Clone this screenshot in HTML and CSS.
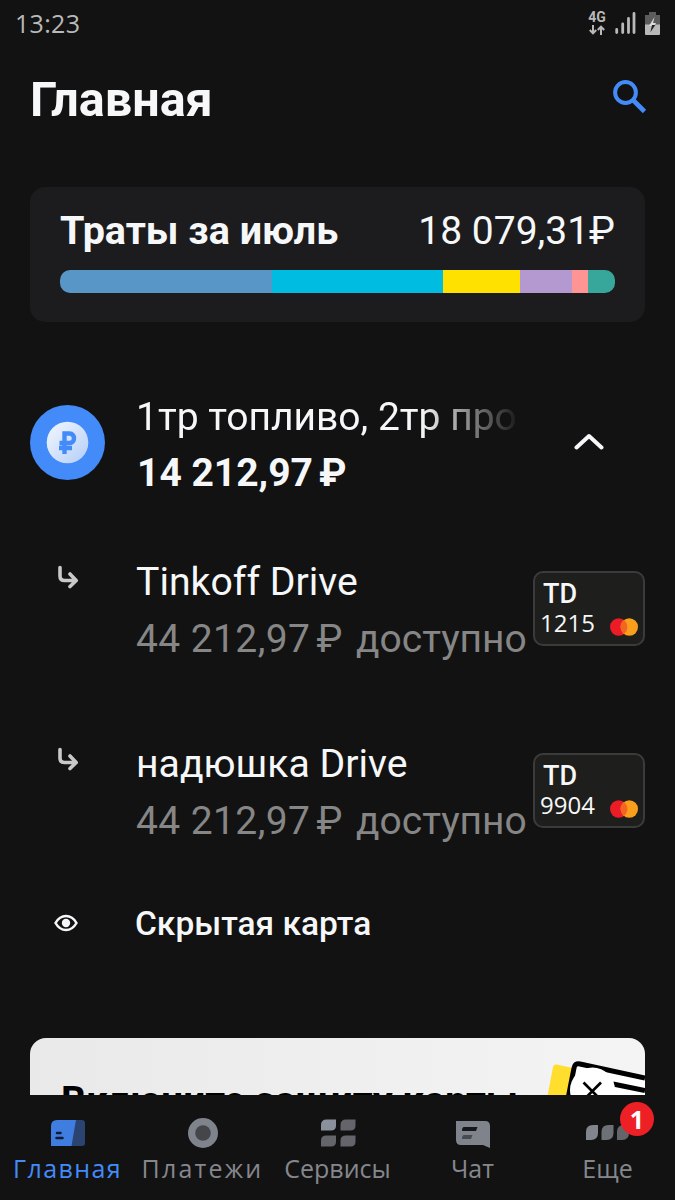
FILE: index.html
```html
<!DOCTYPE html>
<html lang="ru">
<head>
  <meta charset="UTF-8" />
  <title>Главная</title>
  <link rel="stylesheet" href="styles.css">
</head>
<body>

<div class="status-bar">
  <span class="clock">13:23</span>
  <div class="status-icons">
    <div class="network">
      <span>4G</span>
      <svg width="16" height="10" viewBox="0 0 16 10">
        <path d="M4 0V8M.8 5 4 8.4 7.2 5M12 10V2M8.8 5 12 1.6 15.2 5" fill="none" stroke="currentColor" stroke-width="2"/>
      </svg>
    </div>
    <svg width="21" height="22" viewBox="0 0 21 22">
      <path d="M1.7 17.5V20.5M7.7 12V20.5M13.5 6.5V20.5M19 1.5V20.5" stroke="currentColor" stroke-width="2.8" stroke-linecap="round"/>
    </svg>
    <svg width="15" height="23" viewBox="0 0 15 23">
      <path d="M4 0H11V3H15V13H0V3H4Z" fill="#5c5c5c"/>
      <path d="M0 12.500H15V22Q15 23 14 23H1Q0 23 0 22Z" fill="currentColor"/>
      <path d="M9.500 5 4 14H7L5.500 20 11 11H8Z" fill="#ddd"/>
      <path d="M7 13H10.300L5.300 20.500Z" fill="#222"/>
    </svg>
  </div>
</div>

<header class="header">
  <h1>Главная</h1>
  <svg class="search" width="34" height="34" viewBox="0 0 34 34">
    <circle cx="12.500" cy="12.500" r="10.400" fill="none" stroke="currentColor" stroke-width="4"/>
    <path d="M20.500 20.500 31.500 31.500" stroke="currentColor" stroke-width="4.600"/>
  </svg>
</header>

<main class="content">
  <section class="spend">
    <div class="spend-top">
      <h2>Траты за июль</h2>
      <span class="spend-sum">18 079,31₽</span>
    </div>
    <div class="spend-bar">
      <i class="seg blue"></i>
      <i class="seg cyan"></i>
      <i class="seg yellow"></i>
      <i class="seg purple"></i>
      <i class="seg pink"></i>
      <i class="seg green"></i>
    </div>
  </section>

  <section class="account">
    <svg class="account-icon" width="75" height="75" viewBox="0 0 75 75">
      <defs>
        <linearGradient id="coin" x1="0" y1="0" x2="1" y2="1">
          <stop offset="0" stop-color="#f4f8fe"/>
          <stop offset="1" stop-color="#b3cdf8"/>
        </linearGradient>
      </defs>
      <circle cx="37.500" cy="37.500" r="37.500" fill="#428bf9"/>
      <circle cx="37.500" cy="37.500" r="20.800" fill="url(#coin)"/>
      <path d="M34.500 49 V28.500H39.500C45.500 28.500 45.500 38 39.500 38H29.500M29 43H42" fill="none" stroke="#428bf9" stroke-width="4.400"/>
    </svg>
    <div class="account-text">
      <div class="account-name">1тр топливо, 2тр продукты</div>
      <div class="account-sum">14 212,97<span class="rub">₽</span></div>
    </div>
    <svg class="chevron" width="30" height="17" viewBox="0 0 30 17">
      <path d="M2.500 14.500 15 3 27.500 14.500" fill="none" stroke="currentColor" stroke-width="4" stroke-linecap="round" stroke-linejoin="round"/>
    </svg>
  </section>

  <section class="card-row">
    <svg class="sub-arrow" width="22" height="24" viewBox="0 0 22 24">
      <path d="M3 2.500V11Q3 15.500 7.500 15.500H19M13 9 19.200 15.500 13 21.500" fill="none" stroke="currentColor" stroke-width="3.600" stroke-linecap="round" stroke-linejoin="round"/>
    </svg>
    <div class="card-text">
      <div class="card-name">Tinkoff Drive</div>
      <div class="card-sum"><span class="num">44 212,97</span><span class="rub">₽</span> <span class="avail">доступно</span></div>
    </div>
    <div class="plastic">
      <span class="plastic-type">TD</span>
      <div class="plastic-bottom">
        <span class="plastic-num">1215</span>
        <svg width="28" height="18" viewBox="0 0 28 18">
          <circle cx="8.700" cy="9" r="8.700" fill="#eb1c26"/>
          <circle cx="19.300" cy="9" r="8.700" fill="#f99f1b"/>
          <path d="M14 2.100A8.700 8.700 0 0 1 14 15.900A8.700 8.700 0 0 1 14 2.100" fill="#f26522"/>
        </svg>
      </div>
    </div>
  </section>

  <section class="card-row">
    <svg class="sub-arrow" width="22" height="24" viewBox="0 0 22 24">
      <path d="M3 2.500V11Q3 15.500 7.500 15.500H19M13 9 19.200 15.500 13 21.500" fill="none" stroke="currentColor" stroke-width="3.600" stroke-linecap="round" stroke-linejoin="round"/>
    </svg>
    <div class="card-text">
      <div class="card-name">надюшка Drive</div>
      <div class="card-sum"><span class="num">44 212,97</span><span class="rub">₽</span> <span class="avail">доступно</span></div>
    </div>
    <div class="plastic">
      <span class="plastic-type">TD</span>
      <div class="plastic-bottom">
        <span class="plastic-num">9904</span>
        <svg width="28" height="18" viewBox="0 0 28 18">
          <circle cx="8.700" cy="9" r="8.700" fill="#eb1c26"/>
          <circle cx="19.300" cy="9" r="8.700" fill="#f99f1b"/>
          <path d="M14 2.100A8.700 8.700 0 0 1 14 15.900A8.700 8.700 0 0 1 14 2.100" fill="#f26522"/>
        </svg>
      </div>
    </div>
  </section>

  <section class="hidden-card">
    <svg class="eye" width="24" height="18" viewBox="0 0 24 18">
      <path d="M1.500 9Q5.500 2 12 2T22.500 9Q18.500 16 12 16T1.500 9Z" fill="none" stroke="currentColor" stroke-width="2.500"/>
      <circle cx="12" cy="9" r="4.200" fill="currentColor"/>
    </svg>
    <span>Скрытая карта</span>
  </section>

  <section class="banner">
    <div class="banner-title">Включите защиту карты</div>
    <svg class="banner-art" width="98" height="70" viewBox="0 0 98 70">
      <path d="M-1 66 6 29Q6.500 26 9.500 26.600L26 30 20 66Z" fill="#ffde2e"/>
      <path d="M22 66 27.500 28Q28 24 32 24.700L98 38.500V66Z" fill="#fff"/>
      <path d="M20 66 27 30Q27.800 24.800 33 26L98 40M66 46 98 52.500" fill="none" stroke="#000" stroke-width="5"/>
      <circle cx="45.500" cy="52" r="22.500" fill="#fff"/>
      <path d="M36.500 44.500 54 62M54 44.500 36.500 62" stroke="#000" stroke-width="2.700"/>
    </svg>
  </section>
</main>

<nav class="tabs">
  <div class="tab active">
    <svg width="36" height="30" viewBox="0 0 36 30">
      <path d="M24 2H32Q35 2 35 5V25Q35 28 32 28H20Z" fill="#2a4371"/>
      <path d="M7 2H26L21.500 28H1V8Q1 2 7 2Z" fill="#3f7de0"/>
      <path d="M7 15H10.500M6.500 20H12.500" stroke="#111c33" stroke-width="2.500" stroke-linecap="round"/>
    </svg>
    <span>Главная</span>
  </div>
  <div class="tab pay">
    <svg width="30" height="30" viewBox="0 0 30 30">
      <circle cx="15" cy="15" r="15" fill="#7f848c"/>
      <circle cx="15" cy="15" r="7.800" fill="#44464a"/>
    </svg>
    <span>Платежи</span>
  </div>
  <div class="tab services">
    <svg width="36" height="30" viewBox="0 0 36 30">
      <path d="M1 12.500V7Q1 1.500 6.500 1.500H16V7.500Q16 12.500 11 12.500Z" fill="#8b919c"/>
      <path d="M20.500 12.500V7Q20.500 1.500 26 1.500H35.500V7.500Q35.500 12.500 30.500 12.500Z" fill="#63656a"/>
      <path d="M1 28.500V22.500Q1 17.500 6.500 17.500H16V23.500Q16 28.500 11 28.500Z" fill="#63656a"/>
      <path d="M20.500 28.500V22.500Q20.500 17.500 26 17.500H35.500V23.500Q35.500 28.500 30.500 28.500Z" fill="#63656a"/>
    </svg>
    <span>Сервисы</span>
  </div>
  <div class="tab chat">
    <svg width="36" height="30" viewBox="0 0 36 30">
      <path d="M1 3H30Q35 3 35 8V30L28 27H6Q1 27 1 22Z" fill="#7f848c"/>
      <path d="M9 9H22.500L21 13H7Q7 9 9 9Z" fill="#15171b"/>
      <path d="M9 17H17.500L16 21H7Q7 17 9 17Z" fill="#484b51"/>
    </svg>
    <span>Чат</span>
  </div>
  <div class="tab more">
    <svg width="43" height="30" viewBox="0 0 43 30">
      <path d="M0 22V14Q0 7 7 7H12V15Q12 22 5 22Z" fill="#81858d"/>
      <path d="M15.500 22V14Q15.500 7 22.500 7H27.500V15Q27.500 22 20.500 22Z" fill="#6d7076"/>
      <path d="M31 22V14Q31 7 38 7H43V15Q43 22 36 22Z" fill="#63656a"/>
    </svg>
    <b class="badge">1</b>
    <span>Еще</span>
  </div>
</nav>

</body>
</html>
```
FILE: styles.css
```css
html, body {
  margin: 0; padding: 0; height: 100%; width: 100%;
  background: #121212;
  color: #f6f7f8;
  font-family: Roboto, "Noto Sans", sans-serif;
  overflow: hidden;
}
body {
  display: flex;
  flex-direction: column;
}
svg { display: block; flex: none; }
h1, h2 { margin: 0; font-weight: 700; }

.status-bar {
  height: 46px;
  flex: none;
  display: flex;
  align-items: center;
  justify-content: space-between;
  padding: 0 15px;
  color: #b9b9b9;
}
.clock {
  font-family: "Open Sans", sans-serif;
  font-size: 25px;
  font-weight: 500;
  letter-spacing: 0.3px;
}
.status-icons {
  display: flex;
  align-items: center;
  gap: 9px;
}
.network {
  width: 18px;
  display: flex;
  flex-direction: column;
  align-items: center;
  gap: 2px;
  font-size: 14px;
  font-weight: 700;
  line-height: 11px;
}

.header {
  height: 107px;
  flex: none;
  box-sizing: border-box;
  display: flex;
  justify-content: space-between;
  align-items: flex-start;
  padding: 26px 28px 0 30px;
}
h1 {
  font-size: 48.5px;
  line-height: 56px;
}
.search { color: #428bf9; margin-top: 8px; }

.content {
  flex: 1;
  min-height: 0;
  overflow: hidden;
  padding: 34px 30px 0;
}

.spend {
  height: 135px;
  box-sizing: border-box;
  padding: 20px 30px 0;
  border-radius: 15px;
  background: #1c1c1e;
}
.spend-top {
  display: flex;
  justify-content: space-between;
  line-height: 48px;
}
h2 { font-size: 39.5px; }
.spend-sum { font-size: 39px; }
.spend-bar {
  display: flex;
  height: 23px;
  margin-top: 15px;
  border-radius: 10px;
  overflow: hidden;
}
.seg { flex: 27 0 0; }
.blue { flex-grow: 211.5; background: #5896c7; }
.cyan { flex-grow: 171.5; background: #00bce1; }
.yellow { flex-grow: 76.5; background: #ffe100; }
.purple { flex-grow: 52; background: #b498d0; }
.pink { flex-grow: 16.5; background: #ff9494; }
.green { background: #37a79b; }

.account {
  display: flex;
  height: 112px;
  margin-top: 66px;
}
.account-icon { margin-top: 17px; }
.account-text {
  width: 380px;
  margin: 1px 0 0 31px;
  font-size: 39px;
  line-height: 56px;
}
.account-name {
  white-space: nowrap;
  overflow: hidden;
  -webkit-mask-image: linear-gradient(90deg, #000 285px, transparent 385px);
  mask-image: linear-gradient(90deg, #000 285px, transparent 385px);
}
.account-sum {
  padding-left: 1px;
  font-weight: 700;
}
.rub { margin-left: 6px; }
.chevron { margin: 45px 0 0 58px; }

.card-row {
  display: flex;
  height: 126px;
  margin-top: 53px;
}
.card-row + .card-row { margin-top: 56px; }
.sub-arrow {
  color: #c9c9c9;
  margin: 12px 0 0 27px;
}
.card-text {
  width: 397px;
  margin: 1px 0 0 57px;
  font-size: 39px;
  line-height: 57px;
  white-space: nowrap;
}
.card-name { font-size: 39.2px; }
.card-sum { color: #868686; }
.num { letter-spacing: 0.4px; }
.avail { margin-left: 4px; }
.plastic {
  width: 112px;
  height: 75px;
  box-sizing: border-box;
  flex: none;
  margin-top: 18px;
  padding: 7px 5px 0 8px;
  border: 2px solid #3b3b3b;
  border-radius: 10px;
  background: #1e1e1c;
}
.plastic-type {
  display: block;
  font-size: 27px;
  font-weight: 500;
  line-height: 29px;
}
.plastic-bottom {
  display: flex;
  justify-content: space-between;
  align-items: center;
  margin-left: -3px;
}
.plastic-bottom svg { margin-top: 8px; }
.plastic-num {
  font-family: "Open Sans", sans-serif;
  font-size: 24px;
  font-weight: 500;
  line-height: 28px;
}

.hidden-card {
  display: flex;
  align-items: center;
  height: 48px;
  margin-top: 38px;
  font-size: 33.5px;
  font-weight: 500;
}
.eye { margin: 0 57px 0 24px; }

.banner {
  position: relative;
  height: 200px;
  margin-top: 91px;
  border-radius: 16px;
  background: linear-gradient(90deg, #e9e9e9, #f4f4f4);
  overflow: hidden;
}
.banner-title {
  padding: 40px 31px;
  color: #000;
  font-size: 39px;
  font-weight: 700;
  white-space: nowrap;
}
.banner-art {
  position: absolute;
  top: 0;
  right: 0;
}

.tabs {
  height: 105px;
  flex: none;
  display: grid;
  grid-template-columns: repeat(5, 1fr);
  background: #121212;
  color: #85878d;
  font-family: "Open Sans", sans-serif;
  font-size: 25px;
}
.tab {
  position: relative;
  display: flex;
  flex-direction: column;
  align-items: center;
  padding-top: 23px;
  line-height: 41px;
  white-space: nowrap;
}
.tab.active {
  color: #428bf9;
  letter-spacing: 1.4px;
}
.pay { letter-spacing: 2.2px; }
.badge {
  position: absolute;
  top: 7px;
  left: 80px;
  width: 34px;
  height: 34px;
  border-radius: 50%;
  background: #ed2025;
  color: #fff;
  text-align: center;
  line-height: 35px;
}
```
